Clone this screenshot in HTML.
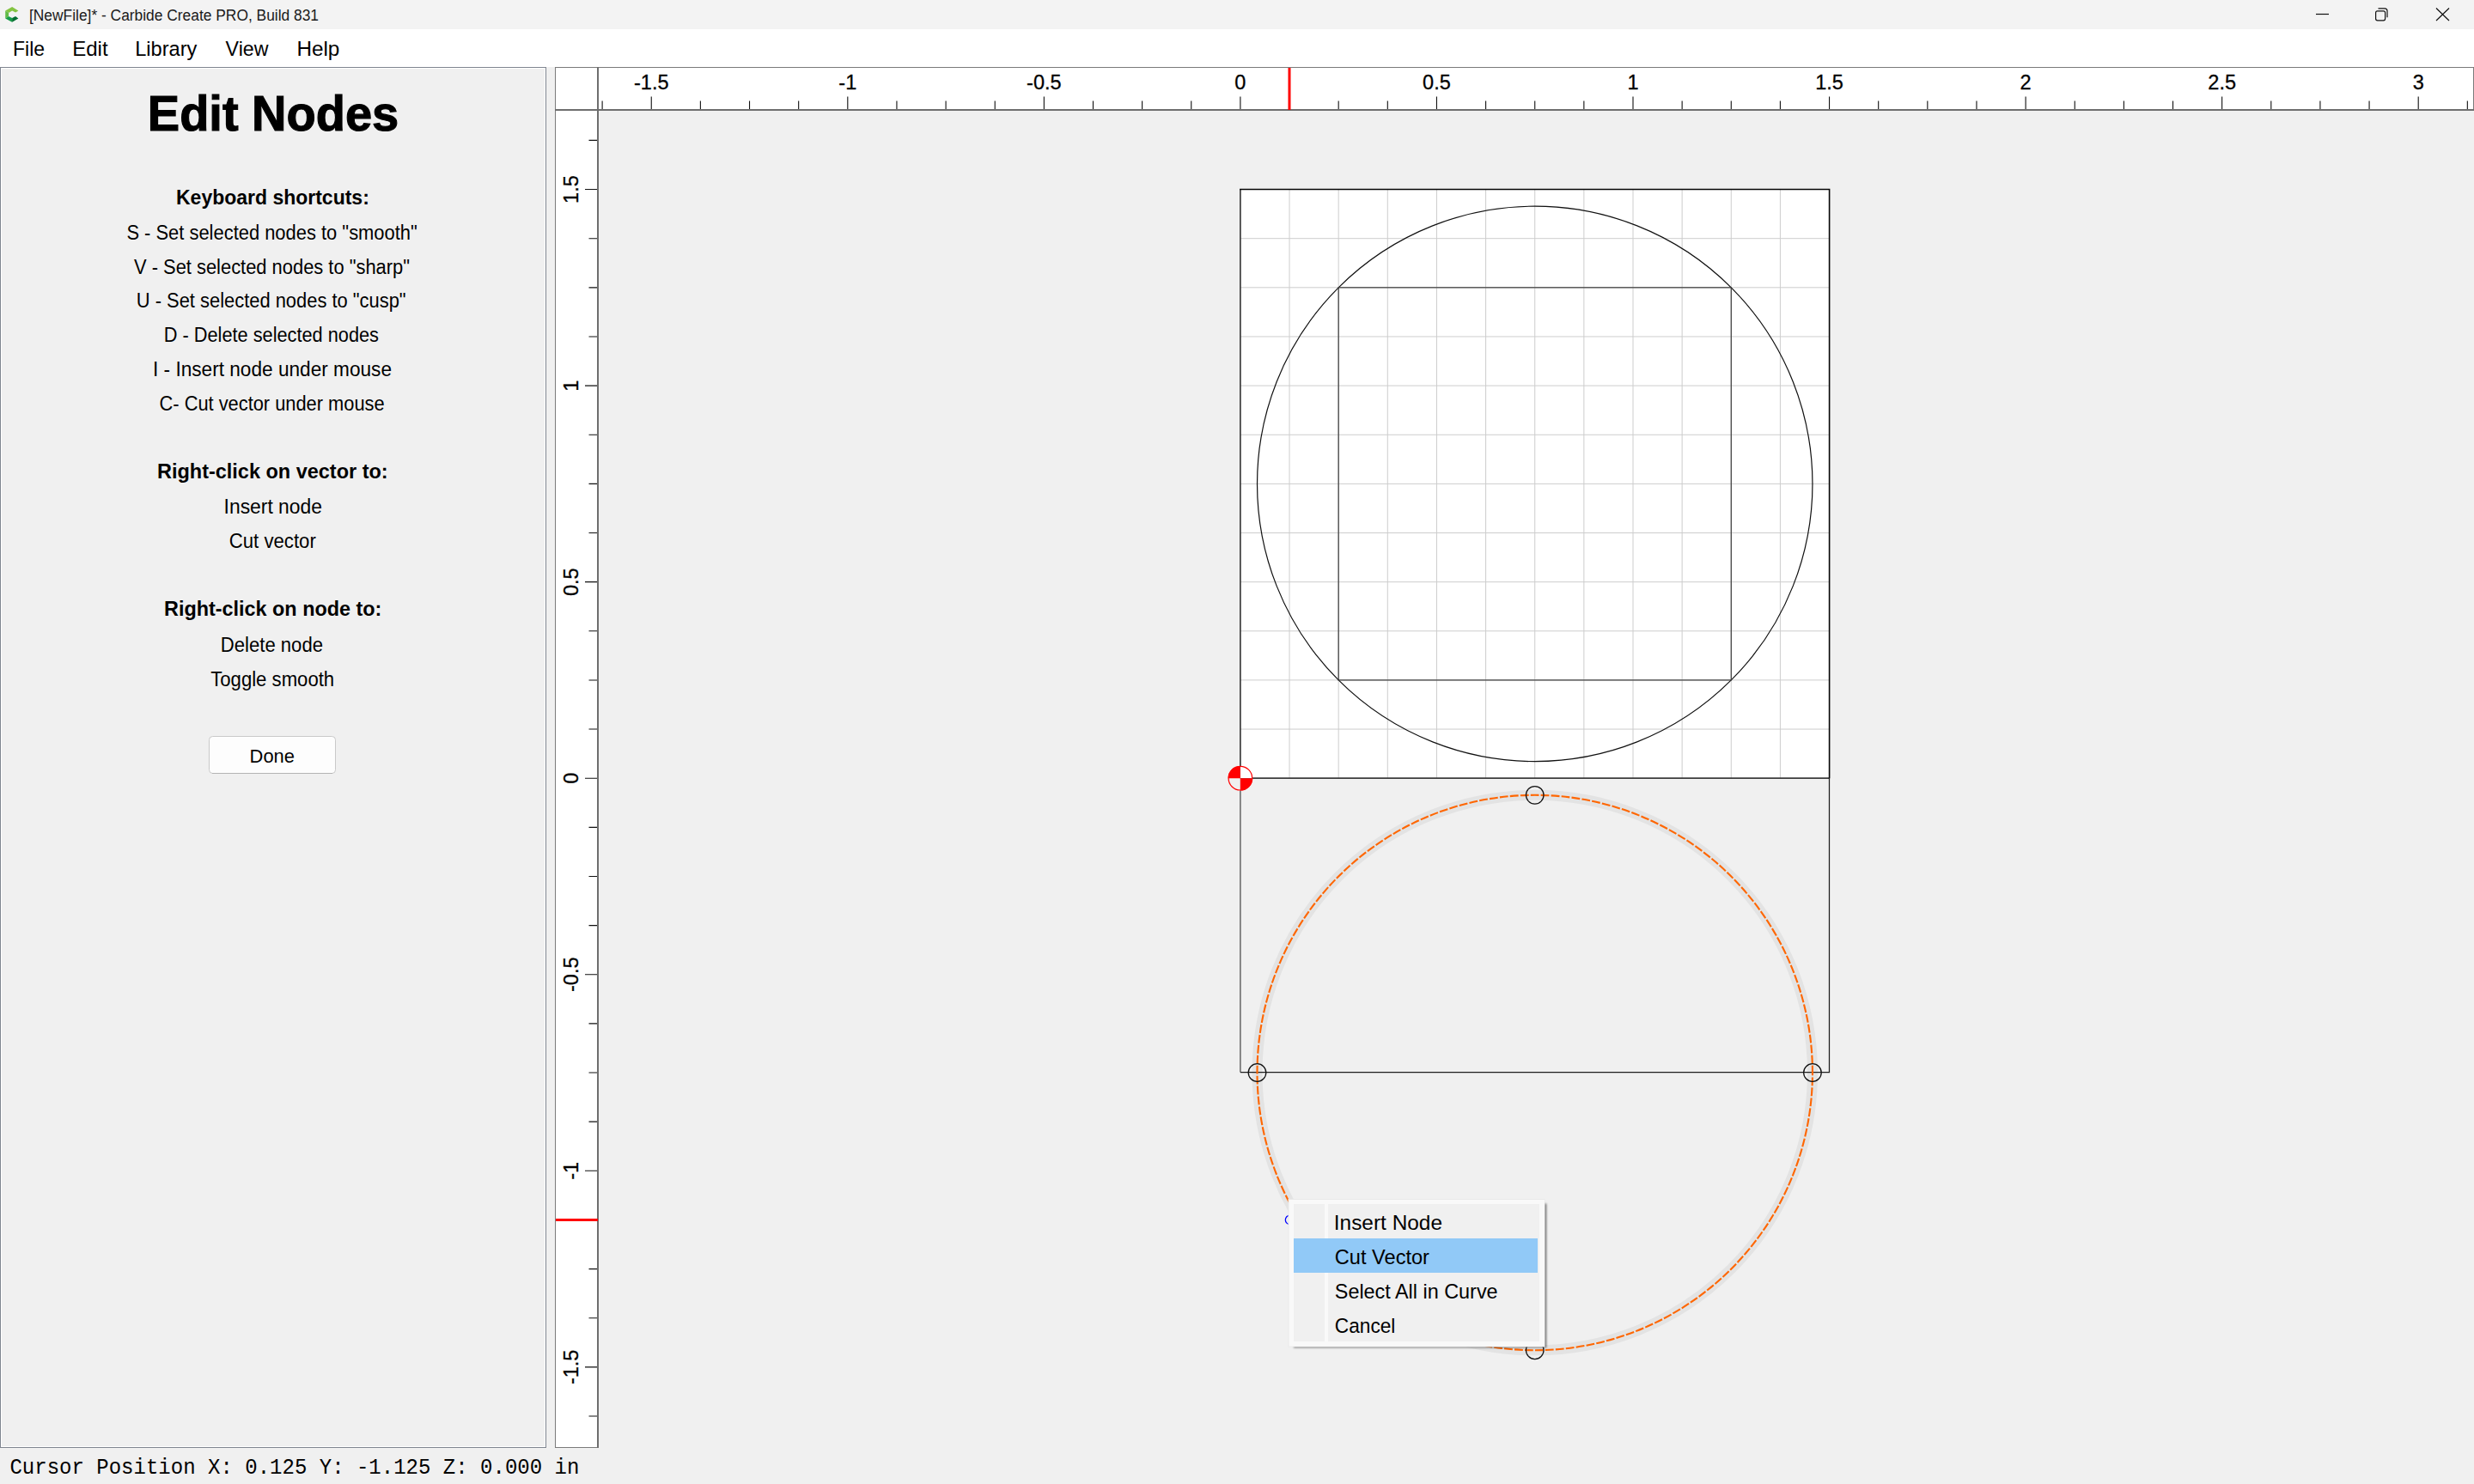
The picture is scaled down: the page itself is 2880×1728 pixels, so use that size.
<!DOCTYPE html>
<html><head><meta charset="utf-8"><title>Carbide Create</title>
<style>
html,body{margin:0;padding:0;width:2880px;height:1728px;overflow:hidden;background:#f0f0f0;}
svg{position:absolute;left:0;top:0;display:block}
text{font-family:"Liberation Sans",sans-serif;fill:#000;}
.mono{font-family:"Liberation Mono",monospace;}
</style></head><body>
<svg width="2880" height="1728" viewBox="0 0 2880 1728">

<rect x="0" y="0" width="2880" height="34" fill="#f3f3f3"/>
<g><path d="M14.1,8.1 L21.4,12.4 L18.1,14.6 L14.1,12.6 L10.1,15.0 L6.2,12.4 Z" fill="#84c441"/><path d="M6.2,12.4 L10.1,15.0 L10.1,19.0 L6.2,21.4 Z" fill="#62bb48"/><path d="M6.2,21.4 L10.1,19.0 L14.1,21.1 L14.1,25.7 Z" fill="#169c48"/><path d="M14.1,21.1 L18.0,19.0 L21.4,21.4 L14.1,25.7 Z" fill="#056e30"/></g>
<text x="34.00" y="23.8" font-size="18" textLength="337.00" lengthAdjust="spacingAndGlyphs" style="fill:#1a1a1a" >[NewFile]* - Carbide Create PRO, Build 831</text>
<line x1="2696" y1="16.5" x2="2711" y2="16.5" stroke="#111" stroke-width="1.2"/>
<rect x="2765.6" y="12.8" width="11" height="11" rx="2" fill="none" stroke="#111" stroke-width="1.2"/>
<path d="M2768.5,9.8 h7.5 a3,3 0 0 1 3,3 v7.5" fill="none" stroke="#111" stroke-width="1.2"/>
<path d="M2836,9.5 L2851,24 M2851,9.5 L2836,24" stroke="#111" stroke-width="1.2"/>
<rect x="0" y="34" width="2880" height="44" fill="#ffffff"/>
<text x="15.00" y="65.0" font-size="23.7" textLength="37.00" lengthAdjust="spacingAndGlyphs" >File</text>
<text x="84.20" y="65.0" font-size="23.7" textLength="41.40" lengthAdjust="spacingAndGlyphs" >Edit</text>
<text x="157.20" y="65.0" font-size="23.7" textLength="72.20" lengthAdjust="spacingAndGlyphs" >Library</text>
<text x="262.60" y="65.0" font-size="23.7" textLength="49.80" lengthAdjust="spacingAndGlyphs" >View</text>
<text x="345.40" y="65.0" font-size="23.7" textLength="50.00" lengthAdjust="spacingAndGlyphs" >Help</text>
<rect x="0.5" y="78.5" width="635" height="1607" fill="#f0f0f0" stroke="#7f8590" stroke-width="1"/>
<rect x="1.5" y="79.5" width="633" height="1605" fill="none" stroke="#ffffff" stroke-width="1"/>
<text x="171.80" y="152.4" font-size="56.5" font-weight="700" textLength="292.40" lengthAdjust="spacingAndGlyphs" stroke="#000" stroke-width="1.1">Edit Nodes</text>
<text x="205.00" y="238.4" font-size="23" font-weight="700" textLength="224.80" lengthAdjust="spacingAndGlyphs" >Keyboard shortcuts:</text>
<text x="147.40" y="279.2" font-size="23" textLength="338.40" lengthAdjust="spacingAndGlyphs" >S - Set selected nodes to &quot;smooth&quot;</text>
<text x="156.00" y="319.1" font-size="23" textLength="321.00" lengthAdjust="spacingAndGlyphs" >V - Set selected nodes to &quot;sharp&quot;</text>
<text x="158.80" y="358.4" font-size="23" textLength="313.80" lengthAdjust="spacingAndGlyphs" >U - Set selected nodes to &quot;cusp&quot;</text>
<text x="190.80" y="398.4" font-size="23" textLength="250.20" lengthAdjust="spacingAndGlyphs" >D - Delete selected nodes</text>
<text x="178.00" y="438.4" font-size="23" textLength="278.00" lengthAdjust="spacingAndGlyphs" >I - Insert node under mouse</text>
<text x="185.60" y="478.4" font-size="23" textLength="262.00" lengthAdjust="spacingAndGlyphs" >C- Cut vector under mouse</text>
<text x="183.00" y="557.4" font-size="23" font-weight="700" textLength="268.60" lengthAdjust="spacingAndGlyphs" >Right-click on vector to:</text>
<text x="260.60" y="598.4" font-size="23" textLength="114.40" lengthAdjust="spacingAndGlyphs" >Insert node</text>
<text x="266.80" y="638.3" font-size="23" textLength="101.00" lengthAdjust="spacingAndGlyphs" >Cut vector</text>
<text x="191.00" y="717.1" font-size="23" font-weight="700" textLength="253.40" lengthAdjust="spacingAndGlyphs" >Right-click on node to:</text>
<text x="256.80" y="758.5" font-size="23" textLength="119.20" lengthAdjust="spacingAndGlyphs" >Delete node</text>
<text x="245.20" y="798.6" font-size="23" textLength="144.00" lengthAdjust="spacingAndGlyphs" >Toggle smooth</text>
<rect x="243.5" y="857.5" width="147" height="43" rx="4" fill="#fdfdfd" stroke="#c9c9c9" stroke-width="1"/>
<line x1="247" y1="900.5" x2="387" y2="900.5" stroke="#b4b4b4" stroke-width="1"/>
<text x="290.60" y="888.1" font-size="22.5" textLength="52.40" lengthAdjust="spacingAndGlyphs" >Done</text>
<text x="11.40" y="1716.1" font-size="25.5" textLength="663.00" lengthAdjust="spacingAndGlyphs" class="mono" >Cursor Position X: 0.125 Y: -1.125 Z: 0.000 in</text>
<rect x="646.5" y="78.5" width="2233" height="50" fill="#ffffff" stroke="#7a7a7a" stroke-width="1"/>
<rect x="646.5" y="78.5" width="50" height="1607" fill="#ffffff" stroke="#7a7a7a" stroke-width="1"/>
<rect x="697" y="129" width="2183" height="1599" fill="#f0f0f0"/>
<rect x="697" y="129" width="2183" height="1557" fill="#f0f0f0"/>
<path d="M701.11,128 V117.5 M758.25,128 V112.4 M815.39,128 V117.5 M872.53,128 V117.5 M929.66,128 V117.5 M986.80,128 V112.4 M1043.94,128 V117.5 M1101.08,128 V117.5 M1158.21,128 V117.5 M1215.35,128 V112.4 M1272.49,128 V117.5 M1329.62,128 V117.5 M1386.76,128 V117.5 M1443.90,128 V112.4 M1501.04,128 V117.5 M1558.18,128 V117.5 M1615.31,128 V117.5 M1672.45,128 V112.4 M1729.59,128 V117.5 M1786.73,128 V117.5 M1843.86,128 V117.5 M1901.00,128 V112.4 M1958.14,128 V117.5 M2015.28,128 V117.5 M2072.41,128 V117.5 M2129.55,128 V112.4 M2186.69,128 V117.5 M2243.83,128 V117.5 M2300.96,128 V117.5 M2358.10,128 V112.4 M2415.24,128 V117.5 M2472.38,128 V117.5 M2529.51,128 V117.5 M2586.65,128 V112.4 M2643.79,128 V117.5 M2700.93,128 V117.5 M2758.06,128 V117.5 M2815.20,128 V112.4 M2872.34,128 V117.5" stroke="#111" stroke-width="1.1" fill="none"/>
<text x="758.25" y="104.0" font-size="23.5" text-anchor="middle" stroke="#000" stroke-width="0.3">-1.5</text>
<text x="986.80" y="104.0" font-size="23.5" text-anchor="middle" stroke="#000" stroke-width="0.3">-1</text>
<text x="1215.35" y="104.0" font-size="23.5" text-anchor="middle" stroke="#000" stroke-width="0.3">-0.5</text>
<text x="1443.90" y="104.0" font-size="23.5" text-anchor="middle" stroke="#000" stroke-width="0.3">0</text>
<text x="1672.45" y="104.0" font-size="23.5" text-anchor="middle" stroke="#000" stroke-width="0.3">0.5</text>
<text x="1901.00" y="104.0" font-size="23.5" text-anchor="middle" stroke="#000" stroke-width="0.3">1</text>
<text x="2129.55" y="104.0" font-size="23.5" text-anchor="middle" stroke="#000" stroke-width="0.3">1.5</text>
<text x="2358.10" y="104.0" font-size="23.5" text-anchor="middle" stroke="#000" stroke-width="0.3">2</text>
<text x="2586.65" y="104.0" font-size="23.5" text-anchor="middle" stroke="#000" stroke-width="0.3">2.5</text>
<text x="2815.20" y="104.0" font-size="23.5" text-anchor="middle" stroke="#000" stroke-width="0.3">3</text>
<path d="M696,1648.99 H685.5 M696,1591.85 H681 M696,1534.71 H685.5 M696,1477.58 H685.5 M696,1420.44 H685.5 M696,1363.30 H681 M696,1306.16 H685.5 M696,1249.03 H685.5 M696,1191.89 H685.5 M696,1134.75 H681 M696,1077.61 H685.5 M696,1020.48 H685.5 M696,963.34 H685.5 M696,906.20 H681 M696,849.06 H685.5 M696,791.93 H685.5 M696,734.79 H685.5 M696,677.65 H681 M696,620.51 H685.5 M696,563.38 H685.5 M696,506.24 H685.5 M696,449.10 H681 M696,391.96 H685.5 M696,334.83 H685.5 M696,277.69 H685.5 M696,220.55 H681 M696,163.41 H685.5" stroke="#111" stroke-width="1.1" fill="none"/>
<text x="0" y="0" font-size="23.5" text-anchor="middle" stroke="#000" stroke-width="0.3" transform="translate(672.8,1591.85) rotate(-90)">-1.5</text>
<text x="0" y="0" font-size="23.5" text-anchor="middle" stroke="#000" stroke-width="0.3" transform="translate(672.8,1363.30) rotate(-90)">-1</text>
<text x="0" y="0" font-size="23.5" text-anchor="middle" stroke="#000" stroke-width="0.3" transform="translate(672.8,1134.75) rotate(-90)">-0.5</text>
<text x="0" y="0" font-size="23.5" text-anchor="middle" stroke="#000" stroke-width="0.3" transform="translate(672.8,906.20) rotate(-90)">0</text>
<text x="0" y="0" font-size="23.5" text-anchor="middle" stroke="#000" stroke-width="0.3" transform="translate(672.8,677.65) rotate(-90)">0.5</text>
<text x="0" y="0" font-size="23.5" text-anchor="middle" stroke="#000" stroke-width="0.3" transform="translate(672.8,449.10) rotate(-90)">1</text>
<text x="0" y="0" font-size="23.5" text-anchor="middle" stroke="#000" stroke-width="0.3" transform="translate(672.8,220.55) rotate(-90)">1.5</text>
<line x1="646" y1="128" x2="2880" y2="128" stroke="#6e6e6e" stroke-width="2"/>
<line x1="696" y1="78" x2="696" y2="1686" stroke="#6e6e6e" stroke-width="2"/>
<line x1="1501.0" y1="79" x2="1501.0" y2="128" stroke="#ff0000" stroke-width="3"/>
<line x1="647" y1="1420.4" x2="696" y2="1420.4" stroke="#ff0000" stroke-width="3"/>
<clipPath id="cv"><rect x="697" y="129" width="2183" height="1599"/></clipPath>
<g clip-path="url(#cv)">
<rect x="1443.9" y="220.5" width="685.7" height="685.7" fill="#ffffff"/>
<path d="M1501.04,220.5 V906.2 M1443.9,277.69 H2129.6 M1558.18,220.5 V906.2 M1443.9,334.82 H2129.6 M1615.31,220.5 V906.2 M1443.9,391.96 H2129.6 M1672.45,220.5 V906.2 M1443.9,449.10 H2129.6 M1729.59,220.5 V906.2 M1443.9,506.24 H2129.6 M1786.73,220.5 V906.2 M1443.9,563.38 H2129.6 M1843.86,220.5 V906.2 M1443.9,620.51 H2129.6 M1901.00,220.5 V906.2 M1443.9,677.65 H2129.6 M1958.14,220.5 V906.2 M1443.9,734.79 H2129.6 M2015.28,220.5 V906.2 M1443.9,791.92 H2129.6 M2072.41,220.5 V906.2 M1443.9,849.06 H2129.6" stroke="#cdcdcd" stroke-width="1" fill="none"/>
<path d="M1443.9,906.2 V220.5" stroke="#3c3c3c" stroke-width="1.7" fill="none"/>
<path d="M1443.9,906.2 H2129.6" stroke="#3c3c3c" stroke-width="1.7" fill="none"/>
<path d="M1443.1,220.5 H2129.6 V906.2" stroke="#050505" stroke-width="1.6" fill="none"/>
<circle cx="1786.73" cy="563.38" r="323.22" fill="none" stroke="#111" stroke-width="1.2"/>
<rect x="1558.18" y="334.83" width="457.10" height="457.10" fill="none" stroke="#3a3a3a" stroke-width="1.2"/>
<circle cx="1786.73" cy="1249.03" r="323.22" fill="none" stroke="#e3e3e3" stroke-width="12"/>
<path d="M1443.9,906 V1248.5" stroke="#5a5a5a" stroke-width="1.4" fill="none"/>
<path d="M1443.9,1248.5 H2129.5 V906" stroke="#1e1e1e" stroke-width="1.25" fill="none"/>
<circle cx="1786.73" cy="1249.03" r="323.22" fill="none" stroke="#ff6600" stroke-width="2.1" stroke-dasharray="9.8 2.2" stroke-dashoffset="6.5"/>
<circle cx="1786.73" cy="925.81" r="10.3" fill="none" stroke="#111" stroke-width="1.25"/>
<circle cx="1463.51" cy="1249.03" r="10.3" fill="none" stroke="#111" stroke-width="1.25"/>
<circle cx="2109.94" cy="1249.03" r="10.3" fill="none" stroke="#111" stroke-width="1.25"/>
<circle cx="1786.73" cy="1572.24" r="10.3" fill="none" stroke="#111" stroke-width="1.25"/>
<circle cx="1501.54" cy="1420.44" r="5.2" fill="none" stroke="#0000ff" stroke-width="1.3"/>
<path d="M1443.90,906.20 L1443.90,891.90 A14.3,14.3 0 0 1 1458.20,906.20 Z" fill="#ffffff"/>
<path d="M1443.90,906.20 L1443.90,920.50 A14.3,14.3 0 0 1 1429.60,906.20 Z" fill="#f0f0f0"/>
<path d="M1443.90,906.20 L1429.60,906.20 A14.3,14.3 0 0 1 1443.90,891.90 Z" fill="#ff0000"/>
<path d="M1443.90,906.20 L1458.20,906.20 A14.3,14.3 0 0 1 1443.90,920.50 Z" fill="#ff0000"/>
<circle cx="1443.90" cy="906.20" r="13.8" fill="none" stroke="#ff0000" stroke-width="1.2"/>
</g>
<filter id="sh" x="-5%" y="-5%" width="115%" height="115%"><feGaussianBlur stdDeviation="1.0"/></filter>
<rect x="1506" y="1401.5" width="294.3" height="167.8" fill="#000" opacity="0.5" filter="url(#sh)"/>
<rect x="1499.5" y="1396" width="299" height="172.5" fill="#e8e8e8"/>
<rect x="1500.5" y="1397" width="297.5" height="170.70000000000005" fill="#f9f9f9"/>
<rect x="1506" y="1402" width="286" height="160" fill="#f0f0f0"/>
<rect x="1542" y="1402" width="4" height="160" fill="#f9f9f9"/>
<rect x="1506" y="1442" width="284" height="40" fill="#91c9f7"/>
<text x="1552.80" y="1432.0" font-size="23.7" textLength="126.20" lengthAdjust="spacingAndGlyphs" >Insert Node</text>
<text x="1553.80" y="1471.6" font-size="23.7" textLength="110.20" lengthAdjust="spacingAndGlyphs" >Cut Vector</text>
<text x="1553.80" y="1511.6" font-size="23.7" textLength="189.80" lengthAdjust="spacingAndGlyphs" >Select All in Curve</text>
<text x="1553.80" y="1551.7" font-size="23.7" textLength="70.60" lengthAdjust="spacingAndGlyphs" >Cancel</text>
</svg></body></html>
